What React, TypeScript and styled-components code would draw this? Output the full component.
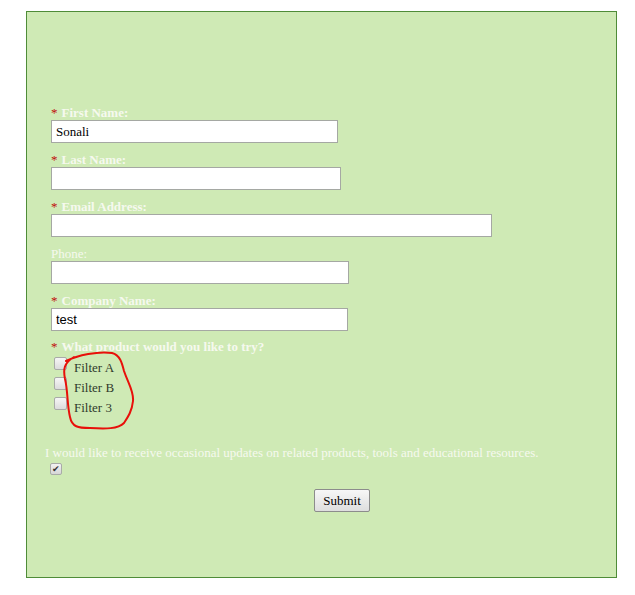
import React, { useState } from "react";
import styled, { createGlobalStyle } from "styled-components";

const GlobalStyle = createGlobalStyle`
  body {
    margin: 0;
    background: #fff;
    font-family: "Liberation Serif", "Times New Roman", serif;
  }
`;

const fields = [
  { key: "first", label: "First Name:", required: true, width: 287, value: "Sonali", sans: false },
  { key: "last", label: "Last Name:", required: true, width: 290, value: "", sans: false },
  { key: "email", label: "Email Address:", required: true, width: 441, value: "", sans: false },
  { key: "phone", label: "Phone:", required: false, width: 298, value: "", sans: false },
  { key: "company", label: "Company Name:", required: true, width: 297, value: "test", sans: true },
];

const products = ["Filter A", "Filter B", "Filter 3"];

const App = () => {
  const [values, setValues] = useState<Record<string, string>>(
    Object.fromEntries(fields.map((f) => [f.key, f.value]))
  );
  const [picked, setPicked] = useState<string[]>([]);
  const [updates, setUpdates] = useState(true);

  const toggle = (p: string) =>
    setPicked((cur) => (cur.includes(p) ? cur.filter((x) => x !== p) : [...cur, p]));

  return (
    <>
      <GlobalStyle />
      <Page>
        <Panel>
          <Fields>
            {fields.map((f) => (
              <Group key={f.key}>
                <Label $required={f.required}>
                  {f.required && <Star>*</Star>}
                  {f.label}
                </Label>
                <TextInput
                  style={{ width: f.width }}
                  $sans={f.sans}
                  value={values[f.key]}
                  onChange={(e) => setValues({ ...values, [f.key]: e.target.value })}
                />
              </Group>
            ))}
            <Question>
              <Label $required>
                <Star>*</Star>
                What product would you like to try?
              </Label>
              <Options>
                {products.map((p) => (
                  <Option key={p}>
                    <Check type="checkbox" checked={picked.includes(p)} onChange={() => toggle(p)} />
                    <OptionText>{p}</OptionText>
                  </Option>
                ))}
                {/* hand-drawn red annotation round the options */}
                <Scribble width="80" height="84" viewBox="0 0 80 84">
                  <path
                    d="M6 10 C18 4 38 0 52 2 C60 4 62 12 64 20 C68 32 74 40 73 50 C72 60 68 66 64 72 C58 78 46 78 30 77 C18 77 12 76 10 66 C7 54 8 40 5 28 C3 18 4 12 14 6"
                    fill="none"
                    stroke="#e8100a"
                    strokeWidth="2"
                    strokeLinecap="round"
                  />
                </Scribble>
              </Options>
            </Question>
          </Fields>
          <Consent>
            <ConsentText>
              I would like to receive occasional updates on related products, tools and educational resources.
            </ConsentText>
            <SmallCheck type="checkbox" checked={updates} onChange={() => setUpdates(!updates)} />
          </Consent>
          <ButtonRow>
            <SubmitButton type="button">Submit</SubmitButton>
          </ButtonRow>
        </Panel>
      </Page>
    </>
  );
};

export default App;

const Page = styled.div`
  padding: 11px 0 0 26px;
`;

const Panel = styled.div`
  box-sizing: border-box;
  width: 591px;
  height: 567px;
  background: #cfeab5;
  border: 1px solid #4f8c38;
  padding-top: 93px;
  font-size: 13px;
`;

const Fields = styled.div`
  padding-left: 24px;
  display: flex;
  flex-direction: column;
  gap: 9px;
`;

const Group = styled.div`
  display: flex;
  flex-direction: column;
  align-items: flex-start;
`;

const Label = styled.div<{ $required?: boolean }>`
  line-height: 15px;
  height: 15px;
  color: #f6f9ef;
  font-weight: ${(p) => (p.$required ? 700 : 400)};
  white-space: nowrap;
`;

const Star = styled.span`
  color: #c00a0a;
  font-weight: 400;
  margin: 0 4px 0 0;
`;

const TextInput = styled.input<{ $sans?: boolean }>`
  box-sizing: border-box;
  height: 23px;
  border: 1px solid #a5a8a3;
  background: #fff;
  padding: 0 4px;
  font-family: ${(p) => (p.$sans ? `"Liberation Sans", Arial, sans-serif` : `"Liberation Serif", serif`)};
  font-size: 13px;
  color: #000;
  outline: none;
  margin: 0;
`;

const Question = styled.div`
  display: flex;
  flex-direction: column;
  margin-top: -1px;
`;

const Options = styled.div`
  position: relative;
  display: flex;
  flex-direction: column;
  gap: 4px;
  padding: 3px 0 30px 3px;
`;

const Option = styled.label`
  display: flex;
  align-items: flex-start;
  height: 16px;
`;

const Check = styled.input`
  appearance: none;
  box-sizing: border-box;
  width: 13px;
  height: 13px;
  margin: 0 7px 0 0;
  border: 1px solid #a9aba8;
  border-radius: 2px;
  background: linear-gradient(#f6f6f6, #dcdcdc);
  &:checked::after {
    content: "✔";
    display: block;
    font-size: 10px;
    line-height: 11px;
    text-align: center;
    color: #333;
  }
`;

const OptionText = styled.span`
  color: #2f3a2c;
  line-height: 15px;
  margin-top: 3px;
  font-size: 13px;
`;

const Scribble = styled.svg`
  position: absolute;
  left: 9px;
  top: -3px;
  pointer-events: none;
`;

const Consent = styled.div`
  padding: 2px 0 0 18px;
  display: flex;
  flex-direction: column;
  align-items: flex-start;
`;

const ConsentText = styled.div`
  color: #f6f9ef;
  line-height: 15px;
`;

const SmallCheck = styled(Check)`
  width: 12px;
  height: 12px;
  margin: 3px 0 0 5px;
  background: linear-gradient(#f2f2f2, #d6d6d6);
  &:checked::after {
    font-size: 9px;
    line-height: 10px;
  }
`;

const ButtonRow = styled.div`
  padding: 14px 0 0 287px;
`;

const SubmitButton = styled.button`
  box-sizing: border-box;
  width: 56px;
  height: 23px;
  font-family: "Liberation Serif", serif;
  font-size: 13px;
  color: #000;
  border: 1px solid #8c8c8c;
  border-radius: 2px;
  background: linear-gradient(#f7f7f7, #dedede);
  padding: 0;
`;
